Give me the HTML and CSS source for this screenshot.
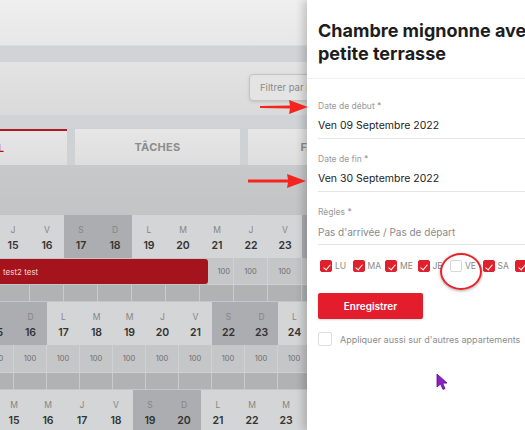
FILE: index.html
```html
<!DOCTYPE html>
<html lang="fr">
<head>
<meta charset="utf-8">
<title>Disponibilités</title>
<link rel="stylesheet" href="styles.css">
</head>
<body>
<div class="page">
  <div class="left">
    <div class="topbar"></div>
    <div class="band"></div>
    <div class="filterbar">
      <div class="filter">Filtrer par logement</div>
    </div>
    <div class="band band2"></div>
    <div class="tabs">
      <div class="tab active">GÉNÉRAL</div>
      <div class="tab">TÂCHES</div>
      <div class="tab">FACTURES</div>
    </div>
    <div class="gap"></div>

    <div class="crow head w34 off4">
      <div class="c"><span class="d">J</span><span class="n">15</span></div>
      <div class="c"><span class="d">V</span><span class="n">16</span></div>
      <div class="c we"><span class="d">S</span><span class="n">17</span></div>
      <div class="c we"><span class="d">D</span><span class="n">18</span></div>
      <div class="c"><span class="d">L</span><span class="n">19</span></div>
      <div class="c"><span class="d">M</span><span class="n">20</span></div>
      <div class="c"><span class="d">M</span><span class="n">21</span></div>
      <div class="c"><span class="d">J</span><span class="n">22</span></div>
      <div class="c"><span class="d">V</span><span class="n">23</span></div>
      <div class="c we"><span class="d">S</span><span class="n">24</span></div>
    </div>
    <div class="crow prices h27">
      <div class="booking">test2 test</div>
      <div class="p p26">100</div>
      <div class="p">100</div>
      <div class="p">100</div>
      <div class="p">100</div>
    </div>
    <div class="crow dark w34 off4">
      <div class="c"></div><div class="c"></div><div class="c"></div><div class="c"></div><div class="c"></div>
      <div class="c"></div><div class="c"></div><div class="c"></div><div class="c"></div><div class="c"></div>
    </div>

    <div class="crow head w33 off19">
      <div class="c we"><span class="d">S</span><span class="n">15</span></div>
      <div class="c we"><span class="d">D</span><span class="n">16</span></div>
      <div class="c"><span class="d">L</span><span class="n">17</span></div>
      <div class="c"><span class="d">M</span><span class="n">18</span></div>
      <div class="c"><span class="d">M</span><span class="n">19</span></div>
      <div class="c"><span class="d">J</span><span class="n">20</span></div>
      <div class="c"><span class="d">V</span><span class="n">21</span></div>
      <div class="c we"><span class="d">S</span><span class="n">22</span></div>
      <div class="c we"><span class="d">D</span><span class="n">23</span></div>
      <div class="c"><span class="d">L</span><span class="n">24</span></div>
    </div>
    <div class="crow prices w33 off19 h28">
      <div class="p">100</div><div class="p">100</div><div class="p">100</div><div class="p">100</div><div class="p">100</div>
      <div class="p">100</div><div class="p">100</div><div class="p">100</div><div class="p">100</div><div class="p">100</div>
    </div>
    <div class="crow dark w33 off19">
      <div class="c"></div><div class="c"></div><div class="c"></div><div class="c"></div><div class="c"></div>
      <div class="c"></div><div class="c"></div><div class="c"></div><div class="c"></div><div class="c"></div>
    </div>

    <div class="crow head w34 off3">
      <div class="c"><span class="d">M</span><span class="n">15</span></div>
      <div class="c"><span class="d">M</span><span class="n">16</span></div>
      <div class="c"><span class="d">J</span><span class="n">17</span></div>
      <div class="c"><span class="d">V</span><span class="n">18</span></div>
      <div class="c we"><span class="d">S</span><span class="n">19</span></div>
      <div class="c we"><span class="d">D</span><span class="n">20</span></div>
      <div class="c"><span class="d">L</span><span class="n">21</span></div>
      <div class="c"><span class="d">M</span><span class="n">22</span></div>
      <div class="c"><span class="d">M</span><span class="n">23</span></div>
      <div class="c"><span class="d">J</span><span class="n">24</span></div>
    </div>
  </div>

  <div class="panel">
    <h1 class="title">Chambre mignonne avec petite terrasse</h1>
    <div class="form">
      <div class="field">
        <div class="label">Date de début *</div>
        <div class="value">Ven 09 Septembre 2022</div>
      </div>
      <div class="field">
        <div class="label">Date de fin *</div>
        <div class="value">Ven 30 Septembre 2022</div>
      </div>
      <div class="field">
        <div class="label">Règles *</div>
        <div class="value muted">Pas d'arrivée / Pas de départ</div>
      </div>
      <div class="days">
        <div class="day"><span class="cb on"></span>LU</div>
        <div class="day"><span class="cb on"></span>MA</div>
        <div class="day"><span class="cb on"></span>ME</div>
        <div class="day"><span class="cb on"></span>JE</div>
        <div class="day"><span class="cb"></span>VE</div>
        <div class="day"><span class="cb on"></span>SA</div>
        <div class="day"><span class="cb on"></span>DI</div>
      </div>
      <button class="save">Enregistrer</button>
      <div class="apply"><span class="cb big"></span>Appliquer aussi sur d'autres appartements</div>
    </div>
  </div>
</div>

<div class="ring"></div>
<svg class="arrow a1" width="50" height="16" viewBox="0 0 50 16"><path d="M0 7 L30 6.5 L29 1 L48 8 L29 15 L30 9.5 L0 9 Z" fill="#f2261f"/></svg>
<svg class="arrow a2" width="60" height="16" viewBox="0 0 60 16"><path d="M0 6.5 L40 6.5 L39 1 L58 8 L39 15 L40 9.5 L0 9.5 Z" fill="#f2261f"/></svg>
<svg class="cursor" width="14" height="18" viewBox="0 0 14 18"><path d="M1 1 L1 14 L4.5 11 L7 16.5 L9 15.5 L6.6 10.2 L11 10 Z" fill="#8b1fc4" stroke="#5a0f86" stroke-width="0.8"/></svg>
</body>
</html>
```

FILE: styles.css
```css
* { box-sizing: border-box; }
html, body { margin: 0; padding: 0; overflow: hidden; }
body {
  width: 525px;
  height: 430px;
  font-family: "Inter", "Open Sans", sans-serif;
  background: #fff;
  position: relative;
}
.page { display: flex; width: 525px; height: 430px; overflow: hidden; }
.left {
  flex: none;
  width: 307px;
  height: 430px;
  overflow: hidden;
  background: #c6c7c8;
}
.topbar { height: 46px; background: linear-gradient(#efefef, #e7e7e7); border-bottom: 1px solid #dadcdd; }
.band { height: 16px; background: #d0d4d7; }
.band2 { height: 13px; }
.filterbar {
  height: 53px;
  background: linear-gradient(#e3e3e3, #dadada);
  display: flex;
  justify-content: flex-end;
  align-items: flex-start;
  padding-top: 12px;
}
.filter {
  width: 70px;
  height: 27px;
  margin-right: -12px;
  border: 1px solid #c4c4c4;
  border-radius: 4px;
  background: #e4e4e4;
  box-shadow: 0 1px 3px rgba(0,0,0,0.12);
  font-size: 9.5px;
  color: #8a8a8a;
  padding: 7px 0 0 10px;
  white-space: nowrap;
  overflow: hidden;
}
.tabs { display: flex; gap: 8px; background: #cfd2d4; padding-top: 1px; height: 37px; margin-left: -98px; }
.tab {
  flex: none;
  width: 165px;
  background: linear-gradient(#e6e6e6, #dedede);
  font-size: 11px;
  font-weight: 700;
  color: #8c8c8c;
  display: flex;
  align-items: center;
  justify-content: center;
  letter-spacing: 0.3px;
}
.tab.active { color: #b2121c; border-top: 2px solid #b11a22; padding-right: 14px; }
.gap { height: 50px; background: linear-gradient(#c8c9ca, #c3c4c5); }

.crow { display: flex; }
.w34 .c, .w34 .p { flex: none; width: 34px; }
.w33 .c, .w33 .p { flex: none; width: 33px; }
.off4 { margin-left: -4px; }
.off19 { margin-left: -19px; }
.off3 { margin-left: -3px; }
.head { height: 43px; background: #d3d4d5; }
.head .c {
  display: flex;
  flex-direction: column;
  align-items: center;
  padding-top: 9px;
  background: #d4d5d6;
}
.head .c.we { background: #abadb0; }
.head .d { font-size: 8.5px; color: #858585; line-height: 12px; }
.head .n { font-size: 10.5px; font-weight: 600; color: #333; line-height: 16px; margin-top: 2px; }

.prices { background: #c4c5c6; }
.h27 { height: 27px; }
.h28 { height: 28px; }
.p {
  flex: none;
  width: 34px;
  border-right: 1px solid #d0d1d2;
  border-bottom: 1px solid #d0d1d2;
  display: flex;
  align-items: center;
  justify-content: center;
  font-size: 7.5px;
  color: #6f6f6f;
  background: #c5c6c7;
}
.p26 { width: 26px; justify-content: flex-end; padding-right: 3px; }
.booking {
  flex: none;
  width: 208px;
  background: #a5131c;
  border-radius: 0 3px 3px 0;
  color: #f2d6d6;
  font-size: 8px;
  display: flex;
  align-items: center;
  padding-left: 3px;
  margin: 1px 0 1px 0;
}
.dark { height: 17px; background: #b2b3b5; }
.dark .c { border-right: 1px solid #cbcbcc; border-bottom: 1px solid #c4c5c6; background: #b1b2b4; }

.panel {
  flex: none;
  width: 260px;
  height: 430px;
  background: #fff;
  box-shadow: -4px 0 8px rgba(0,0,0,0.18);
  position: relative;
  z-index: 1;
}
.title {
  margin: 0;
  padding: 19px 0 13px 11px;
  font-size: 18px;
  line-height: 23px;
  font-weight: 700;
  color: #1d1d1d;
  border-bottom: 1px solid #f0f0f0;
  letter-spacing: 0;
}
.form { padding: 21px 0 0 11px; }
.field { border-bottom: 1px solid #e4e4e4; padding-bottom: 4px; margin-bottom: 14px; }
.label { font-size: 8.5px; color: #9a9a9a; line-height: 12px; }
.value { font-size: 10.5px; color: #222; line-height: 16px; margin-top: 6px; }
.value.muted { font-size: 10px; color: #8a8a8a; }
.days { display: flex; align-items: center; margin-top: 3px; height: 14px; padding-left: 2px; }
.day { flex: none; width: 32.5px; display: flex; align-items: center; gap: 3px; font-size: 8.5px; color: #888; }
.cb {
  flex: none;
  width: 12px;
  height: 12px;
  border-radius: 2px;
  border: 1px solid #d8d8d8;
  background: #fff;
  position: relative;
}
.cb.on { background: #e0202c; border-color: #e0202c; }
.cb.on::after {
  content: "";
  position: absolute;
  left: 3.5px;
  top: 1.5px;
  width: 3px;
  height: 6px;
  border: solid #fff;
  border-width: 0 1.5px 1.5px 0;
  transform: rotate(40deg);
}
.save {
  display: block;
  margin-top: 20px;
  width: 105px;
  height: 26px;
  border: 0;
  border-radius: 2px;
  background: #e31d2b;
  color: #fff;
  font-family: inherit;
  font-size: 10px;
  font-weight: 600;
  box-shadow: 0 1px 2px rgba(0,0,0,0.15);
}
.apply { display: flex; align-items: center; gap: 8px; margin-top: 13px; height: 14px; font-size: 9px; color: #8c8c8c; white-space: nowrap; }
.cb.big { width: 14px; height: 14px; border-color: #ddd; }

.ring {
  position: absolute;
  left: 440px;
  top: 253px;
  width: 42px;
  height: 37px;
  border: 2px solid #ea2228;
  border-radius: 50%;
  box-shadow: 0 1px 3px rgba(0,0,0,0.35);
  z-index: 3;
}
.arrow { position: absolute; z-index: 3; }
.a1 { left: 260px; top: 99px; }
.a2 { left: 248px; top: 173px; }
.cursor { position: absolute; left: 436px; top: 373px; z-index: 3; }
```
